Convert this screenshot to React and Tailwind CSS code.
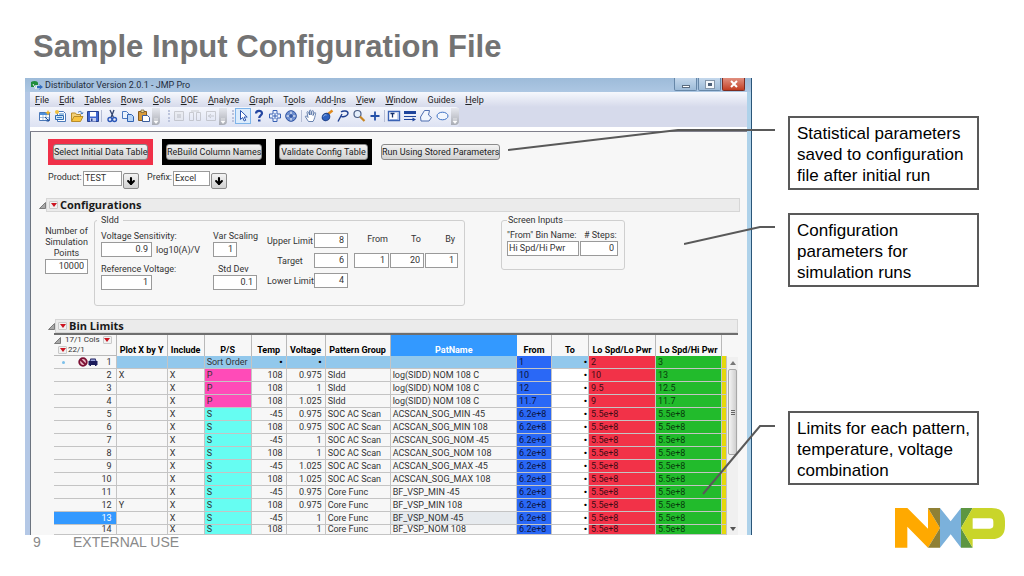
import { ArrowDown } from "lucide-react";

const MENUS = [
  ["", "F", "ile"],
  ["", "E", "dit"],
  ["", "T", "ables"],
  ["", "R", "ows"],
  ["", "C", "ols"],
  ["", "D", "OE"],
  ["", "A", "nalyze"],
  ["", "G", "raph"],
  ["T", "o", "ols"],
  ["Add-", "I", "ns"],
  ["", "V", "iew"],
  ["", "W", "indow"],
  ["Guides", "", ""],
  ["", "H", "elp"],
];

const ROWS = [
  ["", "", "Sort Order", "•", "•", "", "", "1", "2", "3"],
  ["X", "X", "P", "108", "0.975", "SIdd", "log(SIDD) NOM 108 C", "10", "10", "13"],
  ["", "X", "P", "108", "1", "SIdd", "log(SIDD) NOM 108 C", "12", "9.5", "12.5"],
  ["", "X", "P", "108", "1.025", "SIdd", "log(SIDD) NOM 108 C", "11.7", "9", "11.7"],
  ["", "X", "S", "-45", "0.975", "SOC AC Scan", "ACSCAN_SOG_MIN -45", "6.2e+8", "5.5e+8", "5.5e+8"],
  ["", "X", "S", "108", "0.975", "SOC AC Scan", "ACSCAN_SOG_MIN 108", "6.2e+8", "5.5e+8", "5.5e+8"],
  ["", "X", "S", "-45", "1", "SOC AC Scan", "ACSCAN_SOG_NOM -45", "6.2e+8", "5.5e+8", "5.5e+8"],
  ["", "X", "S", "108", "1", "SOC AC Scan", "ACSCAN_SOG_NOM 108", "6.2e+8", "5.5e+8", "5.5e+8"],
  ["", "X", "S", "-45", "1.025", "SOC AC Scan", "ACSCAN_SOG_MAX -45", "6.2e+8", "5.5e+8", "5.5e+8"],
  ["", "X", "S", "108", "1.025", "SOC AC Scan", "ACSCAN_SOG_MAX 108", "6.2e+8", "5.5e+8", "5.5e+8"],
  ["", "X", "S", "-45", "0.975", "Core Func", "BF_VSP_MIN -45", "6.2e+8", "5.5e+8", "5.5e+8"],
  ["Y", "X", "S", "108", "0.975", "Core Func", "BF_VSP_MIN 108", "6.2e+8", "5.5e+8", "5.5e+8"],
  ["", "X", "S", "-45", "1", "Core Func", "BF_VSP_NOM -45", "6.2e+8", "5.5e+8", "5.5e+8"],
  ["", "X", "S", "108", "1", "Core Func", "BF_VSP_NOM 108", "6.2e+8", "5.5e+8", "5.5e+8"],
];

/* ---------- Toolbar ---------- */

const Tool = ({ label, active, faded, children }) => (
  <button
    aria-label={label}
    className={`flex h-4 w-4 shrink-0 items-center justify-center ${
      active ? "border border-[#7db4ea] bg-[#dcecfc]" : ""
    } ${faded ? "opacity-30" : ""}`}
  >
    <svg viewBox="0 0 14 14" className="h-[14px] w-[14px] shrink-0" fill="none" stroke="#2a4fa0">
      {children}
    </svg>
  </button>
);

const Separator = () => <span className="h-3 w-px shrink-0 bg-[#b4bcd4]" />;

const Grip = () => (
  <span className="h-3 w-0 shrink-0 border-l-2 border-dotted border-[#bcc4dc]" />
);

const Overflow = () => (
  <span className="flex h-[17px] w-2 shrink-0 items-end justify-center rounded-br bg-gradient-to-b from-[#e6e8ee] to-[#a9acb4] pb-px">
    <svg viewBox="0 0 6 6" className="h-[6px] w-[6px]">
      <path d="M1 1h4M1 3h4L3 5.5z" fill="#fff" stroke="#fff" strokeWidth="0.6" />
    </svg>
  </span>
);

const Toolbar = () => (
  <div className="flex h-5 items-center bg-[#d6daeb]">
    <div className="flex h-5 items-center rounded-r bg-gradient-to-b from-[#f4f6fc] to-[#dde2f2] pb-[2px] pl-[7px]">
      <Tool label="New data table">
        <path d="M1.500 3.500h10v8h-10z" fill="#fff" stroke="#4a78b8" />
        <path d="M2 4h9v2H2z" fill="#4f8fd8" stroke="none" />
        <path d="M5 6v5M8 6v5M2 8.500h9" stroke="#7fa4cc" strokeWidth="0.7" />
        <path d="M10 1l1 2 2 .5-2 1-1 2-1-2-2-1 2-.5z" fill="#f0b428" stroke="none" />
        <path d="M7 8l4 4M11 9.500V12H8.500" stroke="#1f4f9c" />
      </Tool>
      <Tool label="New script">
        <path d="M3.500 2.500h6l2 2v8h-8z" fill="#fff" stroke="#4a78b8" />
        <path d="M1.500 6.500h8v4h-8z" fill="#cfe4f8" stroke="#2f6cb0" />
        <path d="M5 5h5M3 8.500h5" stroke="#3b82c8" />
        <circle cx="3" cy="3" r="2" fill="#f0c040" stroke="none" />
      </Tool>
      <Tool label="Open">
        <path d="M1.500 12V4h4l1 1.500h4V7" fill="#f3d078" stroke="#b98d2a" />
        <path d="M1.500 12.500l2.500-5h9l-2.500 5z" fill="#f8c440" stroke="#b98d2a" />
        <path d="M8 3.500c2-2 4-1 4 1M10.500 4l1.500 1 1-1.500" stroke="#3a6fb4" />
      </Tool>
      <Tool label="Save">
        <path d="M1.500 2.500h11v10h-11z" fill="#3f66d0" stroke="#27418f" />
        <path d="M4 3h6v4.500H4z" fill="#fff" stroke="none" />
        <path d="M4 9h6v3.500H4z" fill="#c3cdf0" stroke="none" />
        <path d="M5 9.500h1.500v2.500H5z" fill="#27418f" stroke="none" />
      </Tool>
      <Separator />
      <span className="w-0.5" />
      <Tool label="Cut">
        <path d="M9 1L6 8.500M5 1l3.500 7.500" stroke="#33456f" strokeWidth="1.300" />
        <circle cx="5" cy="10.500" r="2" stroke="#2b57b8" strokeWidth="1.400" />
        <circle cx="9.500" cy="10.500" r="2" stroke="#2b57b8" strokeWidth="1.400" />
      </Tool>
      <Tool label="Copy">
        <path d="M1.500 2.500h4l2 2v5h-6z" fill="#eaf2fc" stroke="#4a78c0" />
        <path d="M6.500 5.500h4l2 2v5h-6z" fill="#b9d4f4" stroke="#2f62b4" />
      </Tool>
      <Tool label="Paste">
        <path d="M1.500 2.500h8v9h-8z" fill="#d89c3c" stroke="#8a5c1c" />
        <path d="M4 1h3v2.500H4z" fill="#f2dc9c" stroke="#6c5a30" strokeWidth="0.7" />
        <path d="M5.500 6.500h5l2 2v4h-7z" fill="#fff" stroke="#3a5c9c" />
      </Tool>
      <Overflow />
      <span className="w-2" />
      <Grip />
      <span className="w-px" />
      <Tool label="Run script" faded>
        <path d="M2.500 2.500h9v9h-9z" fill="#e2e2e2" stroke="#777" />
        <path d="M5 5h4v4H5z" fill="#999" stroke="none" />
      </Tool>
      <Tool label="Stop" faded>
        <path d="M1.500 3.500h4v8h-4zM8.500 3.500h4v8h-4zM3 2h8" stroke="#777" />
      </Tool>
      <Tool label="Debug" faded>
        <path d="M2.500 2.500h9v9h-9zM4 7h6M7 5L4.500 7 7 9" stroke="#777" />
      </Tool>
      <Overflow />
      <span className="w-[5px]" />
      <Grip />
      <span className="w-px" />
      <Tool label="Arrow" active>
        <path d="M4.500 1.500v9l2.200-2 1.500 3.500 1.600-.8-1.600-3.200h3z" fill="#fff" stroke="#2a55b0" />
      </Tool>
      <Tool label="Help tool">
        <path d="M4 4.500C4 1 10 1 10 4.300 10 6.500 7.200 6.300 7.200 9" stroke="#2446a0" strokeWidth="2.200" />
        <path d="M6 10.500h2.500v2H6z" fill="#2446a0" stroke="none" />
      </Tool>
      <Tool label="Move tool">
        <path d="M5 1.500h4V5h3.500v4H9v3.500H5V9H1.500V5H5z" fill="#eaf1fc" stroke="#3a62b4" />
        <path d="M7 4v6M4 7h6" stroke="#3a62b4" />
      </Tool>
      <Tool label="Selection tool">
        <circle cx="7" cy="7" r="5.300" fill="#6e8fd0" stroke="#2a4fa0" />
        <path d="M7 2.500v9M2.500 7h9" stroke="#fff" />
        <path d="M7 5v4M5 7h4" stroke="#2a4fa0" strokeWidth="1.500" />
      </Tool>
      <span className="w-0.5" />
      <Separator />
      <span className="w-px" />
      <Tool label="Grabber">
        <path
          d="M4.500 12.500L1.500 8c-.5-1 .8-1.500 1.400-.6L4 8.500 3 3.500c0-1 1.200-1.200 1.500-.2L5.500 6V2c0-1.200 1.500-1.200 1.500 0v4l1-3.800c.4-1 1.600-.7 1.400.3L9 6.500l1.300-2.600c.5-.8 1.600-.3 1.300.6-.6 2.500-.8 5-2.600 8z"
          fill="#fff"
          stroke="#45649c"
          strokeWidth="0.8"
        />
      </Tool>
      <Tool label="Brush">
        <path d="M12.500 1.500L8 5" stroke="#e08a1e" strokeWidth="2.500" />
        <ellipse cx="6" cy="8" rx="4" ry="3.500" fill="#2f62c0" stroke="#1d3f86" transform="rotate(-35 6 8)" />
        <path d="M3.500 7.500C4 6 5.500 5.500 6.500 6" stroke="#9cc0f4" />
      </Tool>
      <Tool label="Lasso">
        <path d="M2 12.500L6 5M5 3c2-1.500 7-1.500 7 1.300 0 2.700-4 4-6.500 3.200" stroke="#1f3f90" strokeWidth="1.400" />
      </Tool>
      <Tool label="Magnifier">
        <circle cx="5.500" cy="5" r="3.500" fill="#e4eefb" stroke="#4c5f86" strokeWidth="1.200" />
        <path d="M8 7.500l4.500 4.500" stroke="#c88624" strokeWidth="2.200" />
      </Tool>
      <Tool label="Crosshairs">
        <path d="M7 2.500v9M2.500 7h9" stroke="#2450a8" strokeWidth="1.800" />
      </Tool>
      <span className="w-px" />
      <Separator />
      <span className="w-px" />
      <Tool label="Annotate">
        <path d="M1.500 2.500h11v9h-11z" fill="#fff" stroke="#3a62b4" strokeWidth="1.400" />
        <path d="M3.500 4.500h4M5.500 4.500v4" stroke="#14306c" strokeWidth="1.300" />
        <path d="M11 4v6.500H3" stroke="#8faadc" />
      </Tool>
      <Tool label="Line">
        <path d="M1 3.500h12" stroke="#1f459c" strokeWidth="3" />
        <path d="M1 7.500h12M1 10.500h9" stroke="#1f459c" strokeWidth="1.200" />
        <path d="M9.500 8.500l3.500 2-3.500 2z" fill="#1f459c" stroke="none" />
      </Tool>
      <Tool label="Polygon">
        <path d="M5.500 1.500h5l-1 4.500 3 2.500-2.500 3.500H2L1.500 8z" fill="#f2f6fd" stroke="#4f6eb0" />
      </Tool>
      <Tool label="Oval">
        <ellipse cx="7.500" cy="7" rx="5.500" ry="3.800" fill="#f2f6fd" stroke="#3f72c4" />
      </Tool>
      <span className="w-px" />
      <Overflow />
    </div>
  </div>
);

/* ---------- Small widgets ---------- */

const Disclosure = () => (
  <svg viewBox="0 0 7 7" className="h-[7px] w-[7px] shrink-0">
    <path d="M6.500 0.500v6h-6z" fill="#a8a8a8" stroke="#666" strokeWidth="0.8" />
  </svg>
);

const RedMenu = ({ label }) => (
  <button
    aria-label={label}
    className="flex h-2 w-[9px] shrink-0 items-center justify-center rounded-[1px] border border-[#c9c9c9] bg-[#f1f1f1]"
  >
    <svg viewBox="0 0 6 4" className="h-1 w-[6px]">
      <path d="M0 0h6L3 4z" fill="#cc1420" />
    </svg>
  </button>
);

const Field = ({ id, value, className = "", right = true }) => (
  <input
    id={id}
    defaultValue={value}
    className={`h-[15px] rounded-none border border-[#9a9a9a] bg-white pb-0.5 leading-[11px] outline-none ${
      right ? "pr-[3px] text-right" : "pl-px"
    } ${className}`}
  />
);

const PushButton = ({ children, className = "" }) => (
  <button
    className={`h-4 rounded-[3px] border border-[#8b8b8b] bg-gradient-to-b from-[#f3f3f3] to-[#d2d2d2] text-center leading-[13px] whitespace-nowrap text-[#1c1c1c] ${className}`}
  >
    {children}
  </button>
);

const DropButton = ({ label }) => (
  <button
    aria-label={label}
    className="mt-[2px] flex h-4 w-4 shrink-0 items-center justify-center rounded-[2px] border border-[#8b8b8b] bg-gradient-to-b from-[#f3f3f3] to-[#d2d2d2]"
  >
    <ArrowDown size={10} strokeWidth={5} color="#000" />
  </button>
);

const SectionTitle = ({ children, menuLabel, className = "" }) => (
  <div className={`flex items-center ${className}`}>
    <Disclosure />
    <div className="flex h-[14px] flex-1 items-center gap-[2px] border border-[#d6d6d6] bg-[#ebebeb] pl-[2px]">
      <RedMenu label={menuLabel} />
      <h2 className="font-['Open_Sans','Noto_Sans',sans-serif] text-[11px] leading-[12px] font-bold text-[#1a1a1a]">
        {children}
      </h2>
    </div>
  </div>
);

/* ---------- Configuration forms ---------- */

const SiddGroup = () => (
  <fieldset className="h-[91px] w-[371px] shrink-0 rounded-[3px] border border-[#cfcfcf] pl-[6px]">
    <legend className="-ml-1 px-1 leading-[11px]">SIdd</legend>
    <div className="flex">
      <div className="w-[112px] pt-1">
        <label htmlFor="sensitivity" className="block leading-[12px]">Voltage Sensitivity:</label>
        <div className="flex items-center gap-1">
          <Field id="sensitivity" value="0.9" className="w-[51px]" />
          <span>log10(A)/V</span>
        </div>
        <label htmlFor="reference" className="mt-[6px] block leading-[12px]">Reference Voltage:</label>
        <Field id="reference" value="1" className="block w-[51px]" />
      </div>
      <div className="w-[54px] pt-1 whitespace-nowrap">
        <label htmlFor="scaling" className="block leading-[12px]">Var Scaling</label>
        <Field id="scaling" value="1" className="block w-[24px]" />
        <label htmlFor="stddev" className="mt-[6px] block pl-[5px] leading-[12px]">Std Dev</label>
        <Field id="stddev" value="0.1" className="block w-[44px]" />
      </div>
      <div className="grid grid-cols-[46px_34px] items-center gap-x-px gap-y-[5px] self-start pt-[7px] text-center whitespace-nowrap">
        <label htmlFor="upper">Upper Limit</label>
        <Field id="upper" value="8" className="w-[34px]" />
        <label htmlFor="target">Target</label>
        <Field id="target" value="6" className="w-[34px]" />
        <label htmlFor="lower">Lower Limit</label>
        <Field id="lower" value="4" className="w-[34px]" />
      </div>
      <div className="ml-[6px] flex gap-px self-start pt-[7px] text-right">
        <div className="w-[35px]">
          <label htmlFor="from" className="block pr-px leading-[12px]">From</label>
          <Field id="from" value="1" className="mt-[8px] block w-full" />
        </div>
        <div className="w-[34px]">
          <label htmlFor="to" className="block pr-[3px] leading-[12px]">To</label>
          <Field id="to" value="20" className="mt-[8px] block w-full" />
        </div>
        <div className="w-[33px]">
          <label htmlFor="by" className="block pr-[3px] leading-[12px]">By</label>
          <Field id="by" value="1" className="mt-[8px] block w-full" />
        </div>
      </div>
    </div>
  </fieldset>
);

const ScreenInputs = () => (
  <fieldset className="ml-[36px] h-[55px] w-[124px] shrink-0 rounded-[3px] border border-[#cfcfcf] pl-[5px]">
    <legend className="px-px leading-[11px]">Screen Inputs</legend>
    <div className="flex gap-px pt-[3px] whitespace-nowrap">
      <div className="w-[72px]">
        <label htmlFor="binname" className="block leading-[12px]">"From" Bin Name:</label>
        <Field id="binname" value="Hi Spd/Hi Pwr" right={false} className="block w-full" />
      </div>
      <div className="w-[38px]">
        <label htmlFor="steps" className="block pl-1 leading-[12px]"># Steps:</label>
        <Field id="steps" value="0" className="block w-full" />
      </div>
    </div>
  </fieldset>
);

/* ---------- Bin limits grid ---------- */

const HEAD = "border-r border-[#b9b9b9] p-0 text-center align-bottom leading-[12px] font-bold text-black";
const CELL = "border-r border-b border-[#c4c4c4] p-0";

const BinTable = () => (
  <table className="flex-1 table-fixed border-separate border-spacing-0 self-start whitespace-nowrap">
    <colgroup>
      <col className="w-[62px]" />
      <col className="w-[51px]" />
      <col className="w-[37px]" />
      <col className="w-[47px]" />
      <col className="w-[35px]" />
      <col className="w-[39px]" />
      <col className="w-[65px]" />
      <col />
      <col className="w-[35px]" />
      <col className="w-[37px]" />
      <col className="w-[67px]" />
      <col className="w-[66px]" />
      <col className="w-[5px]" />
    </colgroup>
    <thead>
      <tr className="h-[21px]">
        <th className="border-r border-b border-[#b9b9b9] p-0 text-[8px] leading-[10px] font-normal">
          <div className="flex items-center justify-end gap-[3px] pr-1">
            <Disclosure />
            <span className="pl-px">17/1 Cols</span>
            <RedMenu label="Columns menu" />
          </div>
          <div className="flex items-center gap-px pl-1">
            <RedMenu label="Rows menu" />
            <span>22/1</span>
          </div>
        </th>
        <th className={HEAD}>Plot X by Y</th>
        <th className={HEAD}>Include</th>
        <th className={HEAD}>P/S</th>
        <th className={HEAD}>Temp</th>
        <th className={HEAD}>Voltage</th>
        <th className={HEAD}>Pattern Group</th>
        <th className="bg-[#3399ff] p-0 text-center align-bottom leading-[12px] font-bold text-white">PatName</th>
        <th className={HEAD}>From</th>
        <th className={HEAD}>To</th>
        <th className={HEAD}>Lo Spd/Lo Pwr</th>
        <th className={HEAD}>Lo Spd/Hi Pwr</th>
        <th className="p-0" />
      </tr>
    </thead>
    <tbody>
      {ROWS.map(([plot, include, ps, temp, volt, group, pat, from, lolo, lohi], i) => {
        const base = i === 0 ? "bg-[#92c8ec]" : "";
        const psColor = ps === "P" ? "bg-[#ff4bb8]" : ps === "S" ? "bg-[#66fdf2]" : base;
        const last = i === ROWS.length - 1;
        return (
          <tr key={i} className={last ? "h-[10px] leading-[9px]" : "h-[13px] leading-[12px]"}>
            <th
              scope="row"
              className={`${CELL} pr-1 text-right font-normal ${i === 12 ? "bg-[#3399ff] text-white" : ""}`}
            >
              {i === 0 ? (
                <span className="flex items-center justify-end">
                  <span className="mr-[13px] h-[3px] w-[3px] rounded-full bg-[#7cc0ea]" />
                  <svg viewBox="0 0 20 10" className="mr-[9px] h-[10px] w-[20px]">
                    <circle cx="5" cy="5" r="3.800" fill="#e8b8c4" stroke="#7c1034" strokeWidth="1.800" />
                    <path d="M2.500 2.500l5 5" stroke="#7c1034" strokeWidth="1.800" />
                    <path d="M12.500 1.500h5l1 2.500h1v4h-1V9h-1.500V8h-4v1H11.500V8h-1V4h1z" fill="#1c1c5c" />
                    <path d="M13 2.500h4l.5 1.500h-5z" fill="#9aa4dc" />
                  </svg>
                  1
                </span>
              ) : (
                i + 1
              )}
            </th>
            <td className={`${CELL} ${base} pl-[2px]`}>{plot}</td>
            <td className={`${CELL} ${base} pl-[2px]`}>{include}</td>
            <td className={`${CELL} ${psColor} pl-[2px]`}>{ps}</td>
            <td className={`${CELL} ${base} pr-[3px] text-right ${i === 0 ? "font-black text-black" : ""}`}>{temp}</td>
            <td className={`${CELL} ${base} pr-[3px] text-right ${i === 0 ? "font-black text-black" : ""}`}>{volt}</td>
            <td className={`${CELL} ${base} pl-[2px]`}>{group}</td>
            <td className={`${CELL} ${base} pl-[2px] ${i === 12 ? "bg-[#e6eaee]" : ""}`}>{pat}</td>
            <td className={`${CELL} bg-[#2a68f6] pl-[2px] text-[#0c1440]`}>{from}</td>
            <td className={`${CELL} pr-px text-right font-black text-black ${i === 0 ? base : "bg-white"}`}>•</td>
            <td className={`${CELL} bg-[#f23248] pl-[2px] text-[#400c14]`}>{lolo}</td>
            <td className={`${CELL} bg-[#22bb2c] pl-[2px] text-[#083c0c]`}>{lohi}</td>
            <td className={`${CELL} bg-[#e6d80c]`} />
          </tr>
        );
      })}
    </tbody>
  </table>
);

const Scrollbar = () => (
  <div className="mt-[22px] flex w-[11px] shrink-0 flex-col items-center bg-[#f0f0f0] pt-1 pb-1">
    <svg viewBox="0 0 6 4" className="h-1 w-[6px]">
      <path d="M0 4h6L3 0z" fill="#777" />
    </svg>
    <div className="mt-1 flex h-[86px] w-[9px] flex-col items-center justify-center gap-px rounded-[2px] border border-[#a8a8a8] bg-gradient-to-r from-[#f4f4f4] to-[#cfcfcf]">
      <span className="h-px w-1 bg-[#666]" />
      <span className="h-px w-1 bg-[#666]" />
      <span className="h-px w-1 bg-[#666]" />
    </div>
    <svg viewBox="0 0 6 4" className="mt-auto h-1 w-[6px]">
      <path d="M0 0h6L3 4z" fill="#555" />
    </svg>
  </div>
);

/* ---------- Application window ---------- */

const TitleBar = () => (
  <div className="flex h-[14px] items-center bg-gradient-to-b from-[#9dbbd9] to-[#adc7e3] pl-[5px]">
    <svg viewBox="0 0 13 10" className="h-[10px] w-[13px]">
      <path d="M1 2c3-2 7-1 7 1v2H5v2H1z" fill="#1f8c3c" />
      <path d="M3 4l3 5 1-4" stroke="#e8f4ec" fill="none" />
      <path d="M7 6h3l-1-2 4 3-4 3 1-2H7z" fill="#2f6cc0" />
    </svg>
    <span className="pl-[2px] text-[#1e2c3c]">Distribulator Version 2.0.1 - JMP Pro</span>
    <div className="ml-auto flex gap-px self-start pr-[6px]">
      <button aria-label="Minimize" className="flex h-[13px] w-[23px] items-center justify-center rounded-b-[2px] border border-t-0 border-[#6687a8] bg-gradient-to-b from-[#c4d8ec] to-[#9dbbd8]">
        <span className="mt-1 h-[3px] w-2 border border-[#5a6c80] bg-white" />
      </button>
      <button aria-label="Maximize" className="flex h-[13px] w-[23px] items-center justify-center rounded-b-[2px] border border-t-0 border-[#6687a8] bg-gradient-to-b from-[#c4d8ec] to-[#9dbbd8]">
        <span className="h-[7px] w-2 border-2 border-[#f4f8fc] bg-[#4c6078] outline outline-[#8496aa]" />
      </button>
      <button aria-label="Close" className="flex h-[13px] w-[23px] items-center justify-center rounded-b-[2px] border border-t-0 border-[#7c2c20] bg-gradient-to-b from-[#e09080] to-[#c23c20]">
        <svg viewBox="0 0 8 8" className="h-2 w-2">
          <path d="M1 1l6 6M7 1L1 7" stroke="#fff" strokeWidth="2" />
        </svg>
      </button>
    </div>
  </div>
);

const JmpWindow = () => (
  <section className="min-w-0 flex-1 self-start border-r border-[#2a5578] font-['Roboto','Noto_Sans',sans-serif] text-[9px] leading-[12px] text-[#333]">
    <TitleBar />
    <div className="border-r-4 border-l-[5px] border-r-[#aed2ea] border-l-[#b4c8e6]">
      <nav className="flex h-[15px] items-center gap-[10px] bg-gradient-to-b from-[#f6f8fd] to-[#d6daeb] pl-[5px] text-[#222]">
        {MENUS.map(([before, key, after]) => (
          <button key={before + key + after} className="whitespace-nowrap">
            {before}
            <u>{key}</u>
            {after}
          </button>
        ))}
      </nav>
      <Toolbar />
      <div className="h-[5px] border-b border-[#80808c] bg-white" />

      <div className="border-l border-[#6c7480] bg-[#f7f7f7] pt-[7px]">
        <div className="flex items-center gap-[9px] pl-[17px]">
          <div className="w-[105px] bg-[#f03048] p-[5px]">
            <PushButton className="w-full">Select Initial Data Table</PushButton>
          </div>
          <div className="w-[104px] bg-black p-[4px] py-[5px]">
            <PushButton className="w-full">ReBuild Column Names</PushButton>
          </div>
          <div className="w-[97px] bg-black p-[4px] py-[5px]">
            <PushButton className="w-full">Validate Config Table</PushButton>
          </div>
          <PushButton className="w-[119px]">Run Using Stored Parameters</PushButton>
        </div>

        <div className="mt-[6px] flex items-start pl-[17px]">
          <label htmlFor="product" className="w-[35px]">Product:</label>
          <Field id="product" value="TEST" right={false} className="mr-px w-[39px]" />
          <DropButton label="Choose product" />
          <label htmlFor="prefix" className="ml-2 w-[26px]">Prefix:</label>
          <Field id="prefix" value="Excel" right={false} className="mr-px w-[37px]" />
          <DropButton label="Choose prefix" />
        </div>

        <SectionTitle menuLabel="Configurations menu" className="mt-[9px] pr-[7px] pl-2">
          Configurations
        </SectionTitle>

        <div className="flex items-start pt-[3px] pl-[14px]">
          <div className="mr-[6px] w-[43px] shrink-0 pt-[11px] text-center">
            <label htmlFor="points" className="block leading-[11px]">Number of Simulation Points</label>
            <Field id="points" value="10000" className="block w-full" />
          </div>
          <SiddGroup />
          <ScreenInputs />
        </div>

        <SectionTitle menuLabel="Bin limits menu" className="mt-[13px] pr-[9px] pl-[17px]">
          Bin Limits
        </SectionTitle>
        <div className="mr-[9px] ml-[23px] flex border-t-2 border-[#6e6e6e]">
          <BinTable />
          <Scrollbar />
        </div>
      </div>
    </div>
  </section>
);

/* ---------- Slide ---------- */

const Callout = ({ className = "", line, children }) => (
  <div className={`relative border-2 border-[#595959] bg-white pt-[5px] pb-[2px] pl-[7px] text-[17px] leading-[21px] text-black ${className}`}>
    {children}
    {line}
  </div>
);

const NxpLogo = () => (
  <svg viewBox="0 0 330 120" className="h-10 w-[110px] shrink-0" role="img" aria-label="NXP">
    <path d="M0 0h37l62 62V0l36 60-36 59-62-63v63H0z" fill="#ffa900" />
    <path d="M99 0h36v119H99l36-59z" fill="#8f8035" />
    <path d="M135 0l32 40 31-40v119l-31-40-32 40z" fill="#7bb1db" />
    <path d="M198 0h35l-35 60 35 59h-35z" fill="#5d9642" />
    <path
      d="M233 0h57q40 0 40 40v13q0 40-40 40h-57v26l-35-59zM233 31v31h52q10 0 10-10V41q0-10-10-10z"
      fill="#c9d52a"
      fillRule="evenodd"
    />
  </svg>
);

export default function App() {
  return (
    <div className="min-h-screen bg-white font-['Liberation_Sans',Arial,sans-serif]">
      <header className="px-[33px] pt-[29px] pb-[13px]">
        <h1 className="text-[31px] leading-[36px] font-bold text-[#737373]">Sample Input Configuration File</h1>
      </header>

      <main className="flex gap-[36px] pr-[45px] pl-[25px]">
        <JmpWindow />
        <aside className="w-[191px] shrink-0 pt-[38px]">
          <Callout
            line={
              <svg viewBox="0 0 267 24" className="absolute top-[10px] right-full mr-[15px] h-6 w-[267px]">
                <path d="M0 22L170 2h97" fill="none" stroke="#595959" strokeWidth="2" />
              </svg>
            }
          >
            Statistical parameters saved to configuration file after initial run
          </Callout>
          <Callout
            className="mt-[23px]"
            line={
              <svg viewBox="0 0 91 20" className="absolute top-[11px] right-full mr-[15px] h-5 w-[91px]">
                <path d="M0 18L76 1h15" fill="none" stroke="#595959" strokeWidth="2" />
              </svg>
            }
          >
            Configuration parameters for simulation runs
          </Callout>
          <Callout
            className="mt-[124px]"
            line={
              <svg viewBox="0 0 73 70" className="absolute top-[12px] right-full mr-[15px] h-[70px] w-[73px]">
                <path d="M1 69L58 1h15" fill="none" stroke="#595959" strokeWidth="2" />
              </svg>
            }
          >
            Limits for each pattern, temperature, voltage combination
          </Callout>
        </aside>
      </main>

      {/* The logo reaches up beside the window's last rows */}
      <footer className="-mt-[27px] flex items-end pr-[19px] pl-[33px] text-[14px] leading-[16px] text-[#8a8a8a]">
        <span className="w-10">9</span>
        <span>EXTERNAL USE</span>
        <span className="mb-[2px] ml-auto">
          <NxpLogo />
        </span>
      </footer>
    </div>
  );
}
